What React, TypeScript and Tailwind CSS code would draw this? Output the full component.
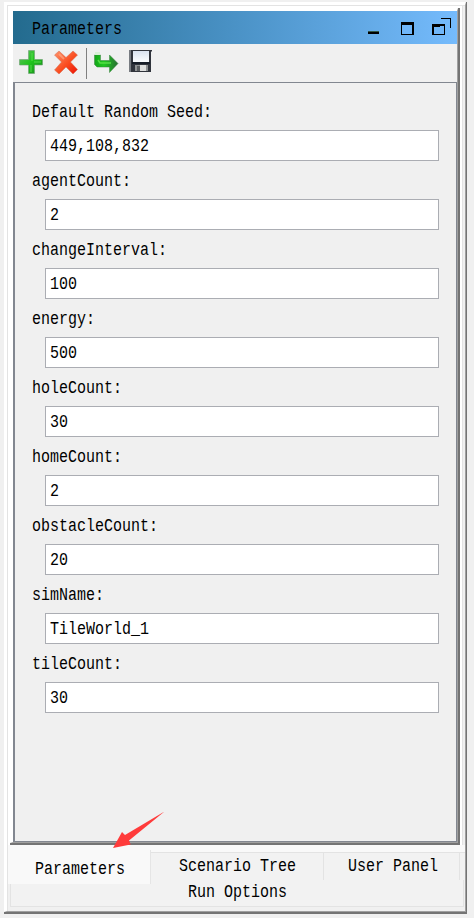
import type { ReactNode } from "react";

const fields = [
  ["Default Random Seed:", "449,108,832"],
  ["agentCount:", "2"],
  ["changeInterval:", "100"],
  ["energy:", "500"],
  ["holeCount:", "30"],
  ["homeCount:", "2"],
  ["obstacleCount:", "20"],
  ["simName:", "TileWorld_1"],
  ["tileCount:", "30"],
];

function Label({ children }: { children: ReactNode }) {
  return <span className="block origin-center scale-y-[1.18] whitespace-pre leading-[18px]">{children}</span>;
}

function TitleBar() {
  return (
    <div className="flex h-[33px] shrink-0 bg-linear-to-r from-[#236b8e] via-[#4a92c6] to-[#75bbfd] pl-[19px] pt-[11px]">
      <Label>Parameters</Label>
      <svg className="-mt-[11px] ml-auto shrink-0" width="100" height="33" shapeRendering="crispEdges">
        <path d="M11 20h11v1h-11z" fill="#315747" />
        <path d="M11 21h11v2h-11zM44 11h13v13h-13zM75 13h13v11h-13zM84 7h10v10h-1v-9h-9z" fill="#000" />
        <path d="M45 14h10v9h-10zM77 16h6v-1h4v8h-10z" fill="#70b6f8" />
      </svg>
    </div>
  );
}

function Toolbar() {
  return (
    <div className="flex h-[38px] shrink-0 bg-[#f0f0f0]">
      <svg width="150" height="38" viewBox="13 44 150 38">
        <defs>
          <linearGradient id="plus" x1="0" y1="0" x2="1" y2="1">
            <stop offset="0" stopColor="#69bc67" />
            <stop offset=".5" stopColor="#1fc51b" />
            <stop offset="1" stopColor="#1b8421" />
          </linearGradient>
          <linearGradient id="cross" x1="0" y1="0" x2="1" y2="1">
            <stop offset="0" stopColor="#ff936b" />
            <stop offset=".55" stopColor="#fa4d20" />
            <stop offset="1" stopColor="#ed1206" />
          </linearGradient>
          <linearGradient id="turn" x1="0" y1="0" x2="1" y2="0">
            <stop offset="0" stopColor="#14a519" />
            <stop offset=".4" stopColor="#20c720" />
            <stop offset="1" stopColor="#286e32" />
          </linearGradient>
          <linearGradient id="paper" x1="0" y1="0" x2="0" y2="1">
            <stop offset="0" stopColor="#d8e2ef" />
            <stop offset="1" stopColor="#fbfdff" />
          </linearGradient>
        </defs>
        <path d="M28.500 50.500h6v9h8v5.500h-8v8.500h-6v-8.500h-9v-5.500h9z" fill="url(#plus)" stroke="#6f9f74" strokeOpacity=".6" />
        <path d="M32 53v8M31 65v7M34 62h7" stroke="#58df4d" strokeWidth="2" fill="none" opacity=".45" />
        <path d="M59 51L66 57.500l7-6.500L77.500 55 70.500 62 77.500 69.500 73 74 66 67 59 74 54.500 70 61.500 62 54.500 55z" fill="url(#cross)" stroke="#cf6a50" strokeOpacity=".6" strokeWidth=".8" />
        <path d="M59 54l5 5" stroke="#ffb08c" strokeWidth="2" fill="none" opacity=".6" />
        <path d="M86 48h1v31h-1z" fill="#808080" />
        <path d="M94.500 55h6v5.500h9V55l8.500 8.500-8.500 9V67H97l-2.500-2.500z" fill="url(#turn)" stroke="#3a7f40" strokeOpacity=".7" strokeWidth=".7" />
        <path d="M98 60l2 3h11" stroke="#55de45" strokeWidth="1.500" fill="none" />
        <path d="M95 52h5v3h-5z" fill="#d9f0d6" />
        <path d="M129 50h23v1l-1 1v20h-22z" fill="#30343c" />
        <path d="M129 50h2v22h-2z" fill="#777b81" />
        <path d="M133 51h16v11h-16z" fill="url(#paper)" />
        <path d="M132 62h18v2h-18z" fill="#171e28" />
        <path d="M135 65h13v6h-13z" fill="#8f9294" />
        <path d="M140 65h6v6h-6z" fill="#dedfde" />
        <path d="M137 66h3v5h-3z" fill="#5a5d60" />
      </svg>
    </div>
  );
}

function Tabs() {
  return (
    <div className="flex h-[65px] bg-[#f9f9f9]">
      <div className="flex w-[143px] shrink-0 flex-col pt-[5px]">
        <div className="h-[34px] border-r border-[#e5e5e5] pl-[27px] pt-[11px]"><Label>Parameters</Label></div>
        <div className="flex h-[26px] bg-[#f0f0f0] pl-[2px]">
          <div className="h-[23px] grow border-b border-l border-[#e3e3e3] bg-[#f2f2f2]" />
        </div>
      </div>
      <div className="flex grow flex-col bg-[#f0f0f0]">
        <div className="h-[7px] bg-[#f9f9f9]" />
        <div className="flex h-[28px] border-t border-[#e3e3e3] bg-[#f2f2f2]">
          <div className="w-[173px] border-r border-[#e3e3e3] pl-[28px] pt-[5px]"><Label>Scenario Tree</Label></div>
          <div className="w-[136px] border-r border-[#e3e3e3] pl-[24px] pt-[5px]"><Label>User Panel</Label></div>
        </div>
        <div className="mr-[1px] h-[27px] border-b border-r border-[#e3e3e3] bg-[#f2f2f2] pl-[37px] pt-[4px]"><Label>Run Options</Label></div>
      </div>
    </div>
  );
}

export default function App() {
  return (
    <main className="relative h-[918px] w-[474px] overflow-hidden bg-[#f0f0f0] pl-[4px] pt-[2px] font-['Liberation_Mono',monospace] text-[15px] text-black">
      <div className="h-[912px] w-[463px] border-b-2 border-r border-b-[#747474] border-r-[#747474]">
        <div className="h-[910px] border-b border-l-[3px] border-r border-t-[3px] border-b-[#a0a0a0] border-l-white border-r-[#a0a0a0] border-t-white">
          <div className="h-[906px] border-l border-t border-[#e3e3e3]">
            <div className="h-[839px] w-[455px] border-r border-[#e3e3e3] bg-white pl-[2px] pr-[2px] pt-[2px]">
              <div className="h-[837px] border-b-2 border-r-2 border-[#747474]">
                <div className="h-[835px] border-b border-l-[3px] border-r border-t-[3px] border-b-[#a0a0a0] border-l-white border-r-[#a0a0a0] border-t-white">
                  <div className="flex h-[831px] flex-col">
                    <TitleBar />
                    <Toolbar />
                    <div className="flex grow flex-col gap-[7px] border-b border-l-2 border-r border-t border-[#828790] bg-[#f0f0f0] pl-[17px] pr-[17px] pt-[20px]">
                      {fields.map(([label, value]) => (
                        <div key={label} className="flex h-[62px] shrink-0 flex-col">
                          <div className="h-[27px] pt-[1px]"><Label>{label}</Label></div>
                          <div className="ml-[13px] h-[31px] border border-[#abadb3] bg-white pl-[4px] pt-[7px]"><Label>{value}</Label></div>
                        </div>
                      ))}
                    </div>
                  </div>
                </div>
              </div>
            </div>
            <Tabs />
          </div>
        </div>
      </div>
      <svg className="absolute left-[112px] top-[810px]" width="54" height="40">
        <path d="M52.500 1.500L17 30.500l1.700 4L1 38l9-16 3 3z" fill="#ff3b3b" />
      </svg>
    </main>
  );
}
